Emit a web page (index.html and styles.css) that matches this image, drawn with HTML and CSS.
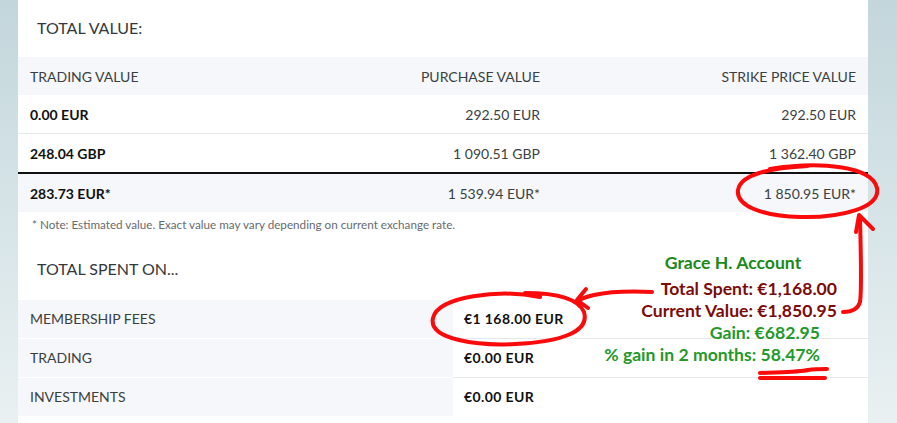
FILE: index.html
```html
<!DOCTYPE html>
<html lang="en">
<head>
<meta charset="utf-8">
<title>Total value</title>
<link rel="stylesheet" href="styles.css">
</head>
<body>
<div class="page">
  <main class="panel">
    <h2 class="section-title first">TOTAL VALUE:</h2>
    <div class="value-table">
      <div class="row head">
        <div class="cell">TRADING VALUE</div>
        <div class="cell num">PURCHASE VALUE</div>
        <div class="cell num">STRIKE PRICE VALUE</div>
      </div>
      <div class="row">
        <div class="cell strong">0.00 EUR</div>
        <div class="cell num">292.50 EUR</div>
        <div class="cell num">292.50 EUR</div>
      </div>
      <div class="row">
        <div class="cell strong">248.04 GBP</div>
        <div class="cell num">1 090.51 GBP</div>
        <div class="cell num">1 362.40 GBP</div>
      </div>
      <div class="row total">
        <div class="cell strong">283.73 EUR*</div>
        <div class="cell num">1 539.94 EUR*</div>
        <div class="cell num">1 850.95 EUR*</div>
      </div>
    </div>
    <p class="note">* Note: Estimated value. Exact value may vary depending on current exchange rate.</p>
    <h2 class="section-title second">TOTAL SPENT ON...</h2>
    <div class="spent-table">
      <div class="label">MEMBERSHIP FEES</div>
      <div class="amount">€1 168.00 EUR</div>
      <div class="label">TRADING</div>
      <div class="amount">€0.00 EUR</div>
      <div class="label">INVESTMENTS</div>
      <div class="amount last">€0.00 EUR</div>
    </div>
  </main>
</div>

<div class="annotation">
  <div class="ann-title">Grace H. Account</div>
  <div class="ann-red">Total Spent: €1,168.00</div>
  <div class="ann-red">Current Value: €1,850.95</div>
  <div class="ann-green">Gain: €682.95</div>
  <div class="ann-green">% gain in 2 months: 58.47%</div>
</div>

<svg class="marks" width="897" height="423" viewBox="0 0 897 423" fill="none" stroke="#fa0a0a" stroke-width="4" stroke-linecap="round" stroke-linejoin="round">
  <path d="M770 169 C 820 161, 872 166, 877 188 C 881 208, 840 218, 800 217 C 760 216, 736 205, 738 190 C 740 176, 765 168, 808 166"/>
  <path d="M540 297 C 500 289, 438 296, 433 318 C 428 340, 480 346, 515 344 C 560 342, 590 332, 584 312 C 578 298, 555 293, 525 293"/>
  <path d="M652 292 C 630 291, 608 292, 594 295 C 586 297, 580 299, 577 301"/>
  <path d="M586 289 L 577 300 L 588 308"/>
  <path d="M843 312 C 852 312, 858 309, 860 302 C 862 290, 861 260, 860 218"/>
  <path d="M856 232 L 859 215 L 873 229"/>
  <path d="M760 373 C 785 372, 800 372, 808 370 C 815 369, 822 369, 827 369"/>
  <path d="M760 378 L 825 378"/>
</svg>
</body>
</html>
```

FILE: styles.css
```css
html, body {
  margin: 0;
  padding: 0;
}

body {
  width: 897px;
  height: 423px;
  overflow: hidden;
  position: relative;
  background: linear-gradient(to bottom, #c3d6db 0%, #d6e4e7 50%, #e9f0f2 100%);
  font-family: "Lato", "Liberation Sans", sans-serif;
  color: #3a3f44;
}

.page {
  display: flex;
  padding: 0 29px 0 18px;
  height: 423px;
}

.panel {
  flex: 1;
  background: #ffffff;
  height: 423px;
}

.section-title {
  margin: 0;
  font-weight: 400;
  font-size: 16px;
  color: #33383d;
  padding-left: 19px;
}

.section-title.first {
  height: 57px;
  line-height: 55px;
}

.value-table .row {
  display: grid;
  grid-template-columns: 303px 231px 1fr;
  height: 38px;
  align-items: center;
  border-bottom: 1px solid #e6e9ec;
}

.value-table .row.head {
  background: #f5f7fa;
  border-bottom: none;
}

.value-table .row:nth-child(3) {
  border-bottom: 2px solid #111;
}

.value-table .row.total {
  background: #f5f7fa;
  border-bottom: none;
}

.cell {
  padding: 0 12px;
  font-size: 14px;
  color: #3a3f44;
  white-space: nowrap;
}

.cell.num {
  text-align: right;
}

.cell.strong {
  font-weight: 700;
  font-size: 14px;
  color: #111;
}

.note {
  margin: 0;
  padding-left: 14px;
  height: 24px;
  line-height: 24px;
  font-size: 11.7px;
  color: #666b70;
}

.section-title.second {
  height: 64px;
  line-height: 66px;
}

.spent-table {
  display: grid;
  grid-template-columns: 435px 1fr;
}

.label {
  background: #f5f7fa;
  height: 38px;
  line-height: 38px;
  padding-left: 12px;
  font-size: 14px;
  color: #3a3f44;
}

.amount {
  height: 38px;
  line-height: 38px;
  padding-left: 11px;
  font-size: 14px;
  letter-spacing: 0.4px;
  font-weight: 700;
  color: #111;
  border-bottom: 1px solid #e6e9ec;
}

.amount.last {
  border-bottom: none;
}

.annotation {
  position: absolute;
  left: 560px;
  top: 252px;
  width: 277px;
  text-align: right;
  font-family: "Lato", "Liberation Sans", sans-serif;
  font-weight: 700;
  font-size: 17.6px;
  line-height: 22px;
}

.ann-title {
  color: #198a19;
  text-align: center;
  width: 346px;
  height: 26px;
}

.ann-red {
  color: #7b0c0c;
}

.ann-green {
  color: #24992a;
  padding-right: 17px;
}

.marks {
  position: absolute;
  left: 0;
  top: 0;
  pointer-events: none;
}
```
